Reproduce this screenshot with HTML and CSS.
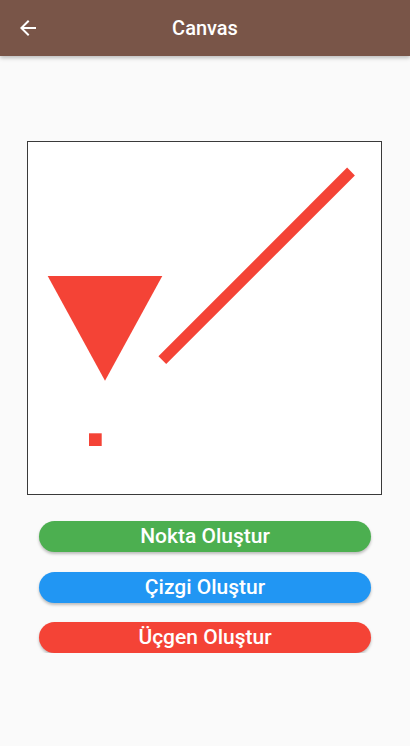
FILE: index.html
```html
<!DOCTYPE html>
<html>
<head>
<meta charset="utf-8">
<link rel="stylesheet" href="styles.css">
</head>
<body>
<header class="appbar">
  <svg class="back" viewBox="0 0 24 24" width="24" height="24"><path fill="#fff" d="M20 11H7.83l5.59-5.59L12 4l-8 8 8 8 1.41-1.41L7.83 13H20v-2z"/></svg>
  <h1 class="title">Canvas</h1>
</header>
<main class="content">
  <div class="board">
    <svg class="drawing" viewBox="28 142 353 352" width="353" height="352">
      <polygon points="47.7,276 162.3,276 105,380.7" fill="#f44336"/>
      <line x1="162.3" y1="360.2" x2="351" y2="171.5" stroke="#f44336" stroke-width="11"/>
      <rect x="89" y="433.3" width="12.7" height="12.7" fill="#f44336"/>
    </svg>
  </div>
  <div class="actions">
    <button class="btn green">Nokta Oluştur</button>
    <button class="btn blue">Çizgi Oluştur</button>
    <button class="btn red">Üçgen Oluştur</button>
  </div>
</main>
</body>
</html>
```
FILE: styles.css
```css
html, body {
  margin: 0;
  padding: 0;
  background: #fafafa;
  font-family: Roboto, "Noto Sans", sans-serif;
}
.appbar {
  height: 56px;
  background: #795548;
  display: flex;
  align-items: center;
  justify-content: center;
  position: relative;
  box-shadow: 0 2px 4px rgba(0,0,0,0.25);
}
.back {
  position: absolute;
  left: 16px;
  top: 16px;
}
.title {
  margin: 0;
  color: #fff;
  font-size: 20px;
  font-weight: 500;
}
.content {
  padding-top: 85px;
  display: flex;
  flex-direction: column;
}
.board {
  margin-left: 27px;
  width: 353px;
  height: 352px;
  border: 1px solid #3a3a3a;
  background: #fff;
}
.drawing {
  display: block;
}
.actions {
  margin-top: 26px;
  margin-left: 39px;
  width: 332px;
  display: flex;
  flex-direction: column;
  gap: 19.5px;
}
.btn {
  height: 31px;
  border: none;
  border-radius: 16px;
  color: #fff;
  font-family: Roboto, sans-serif;
  font-size: 21px;
  font-weight: 500;
  padding: 0;
  line-height: 31px;
  box-shadow: 0 2px 3px rgba(0,0,0,0.25);
}
.green { background: #4caf50; }
.blue { background: #2196f3; }
.red { background: #f44336; }
```
